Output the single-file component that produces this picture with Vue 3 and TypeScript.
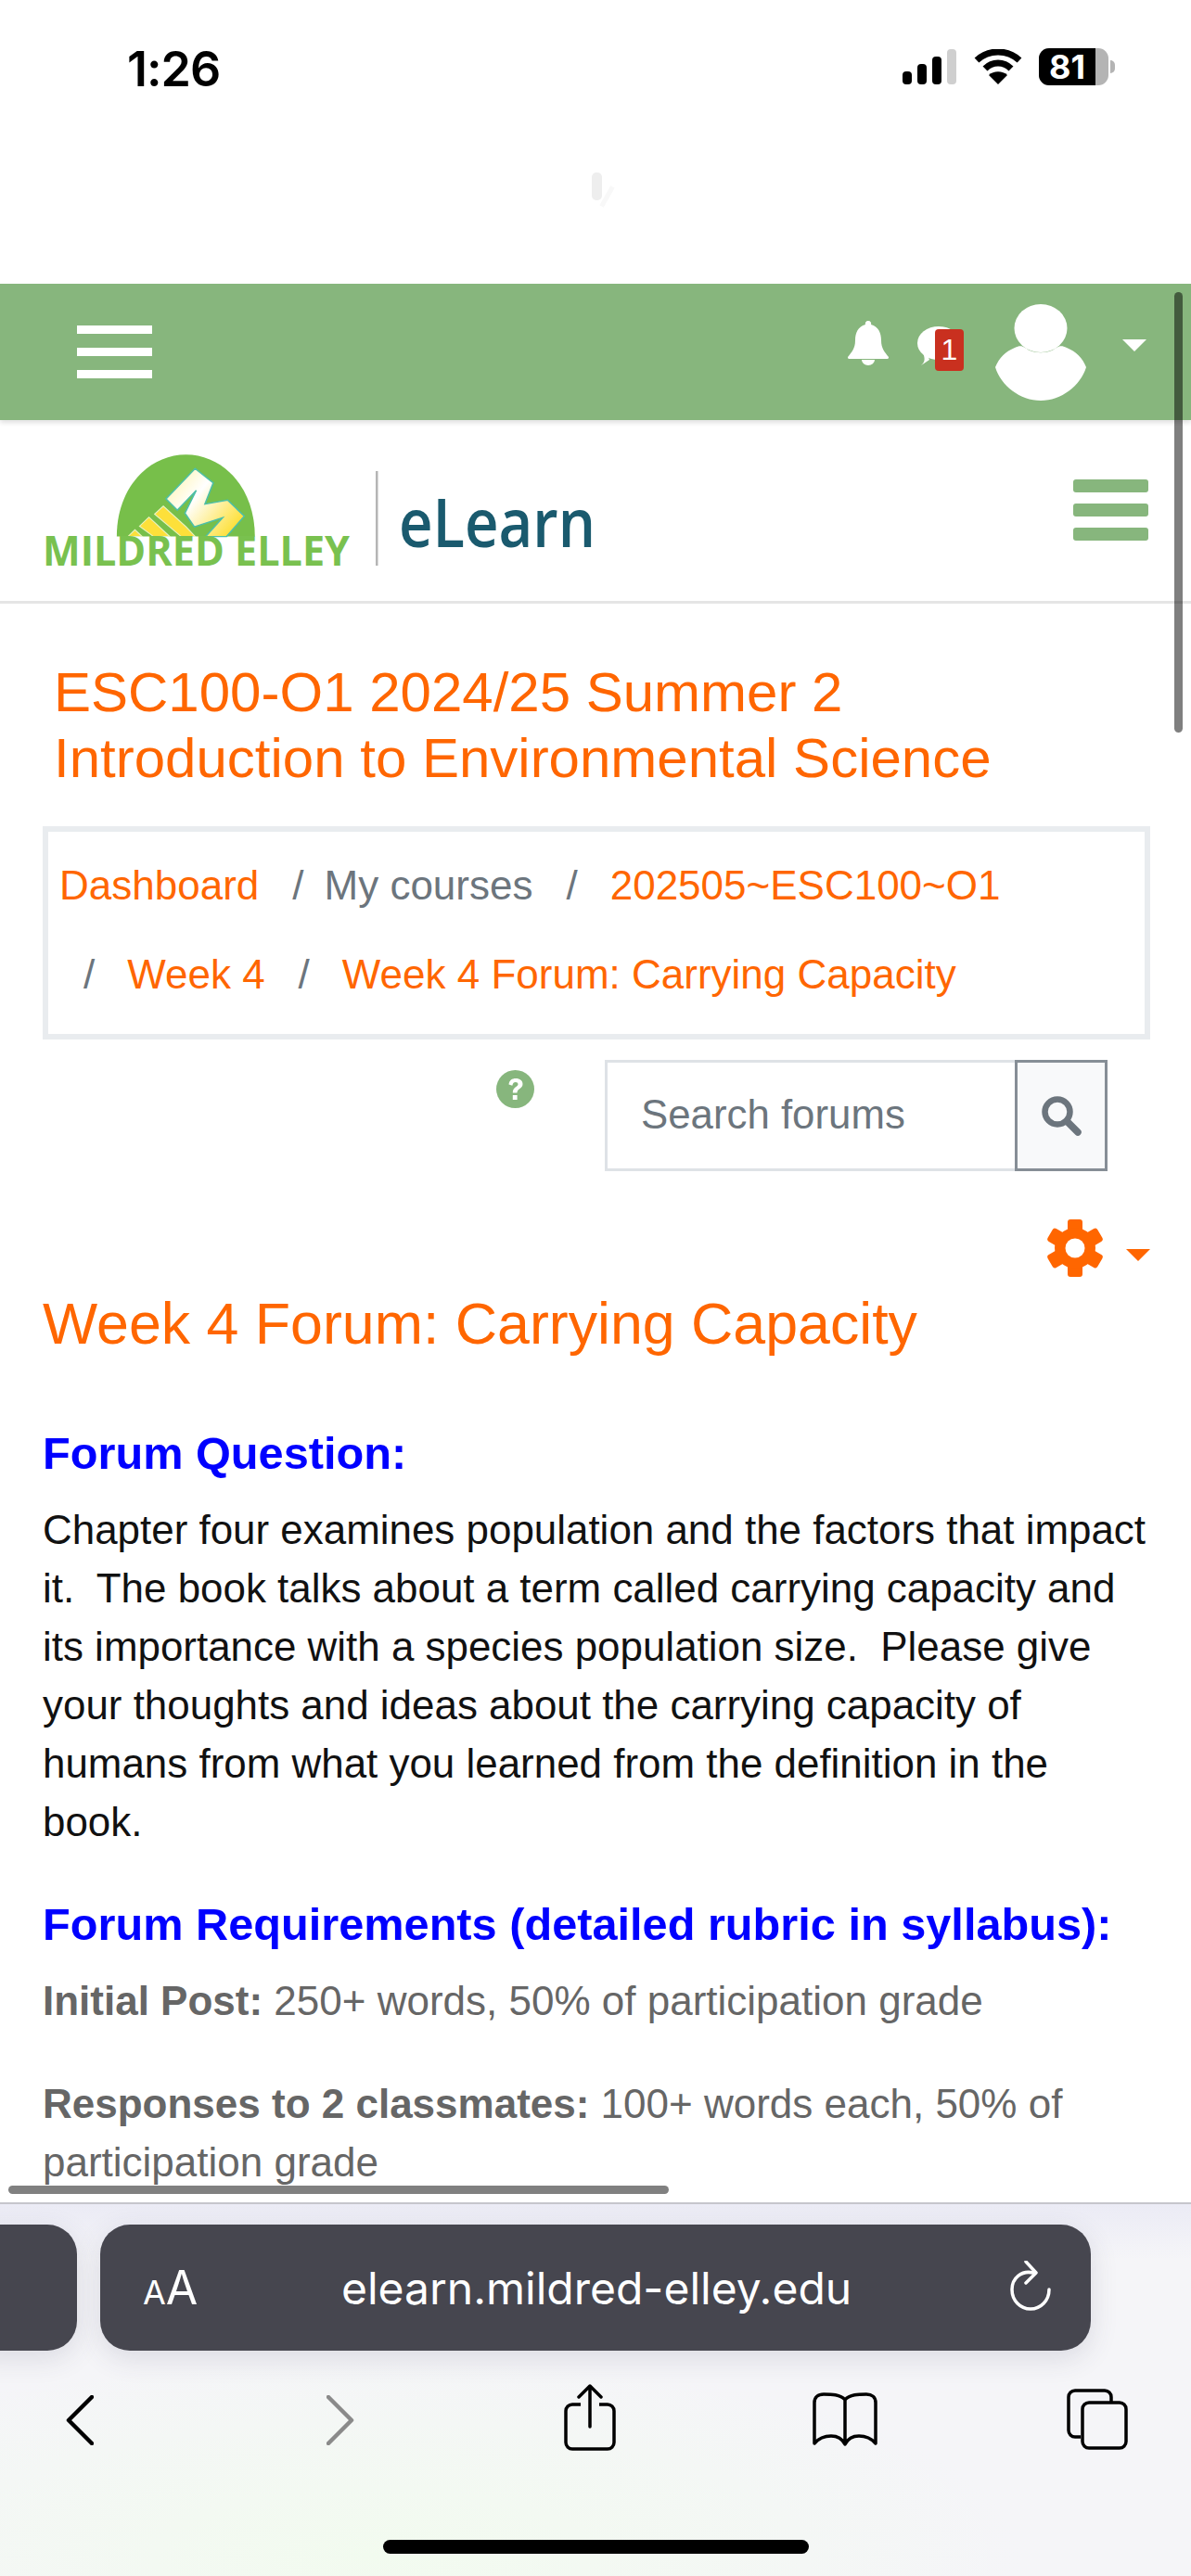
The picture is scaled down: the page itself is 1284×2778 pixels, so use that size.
<script setup lang="ts">
const paragraph = 'Chapter four examines population and the factors that impact it.  The book talks about a term called carrying capacity and its importance with a species population size.  Please give your thoughts and ideas about the carrying capacity of humans from what you learned from the definition in the book.'
</script>

<template>
  <div class="phone">
    <header class="status">
      <span class="time">1:26</span>
      <div class="status-icons">
        <svg class="signal" width="58" height="38" viewBox="0 0 58 38">
          <rect x="0" y="24" width="10" height="14" rx="4" fill="#000" />
          <rect x="16" y="16" width="10" height="22" rx="4" fill="#000" />
          <rect x="32" y="8" width="10" height="30" rx="4" fill="#000" />
          <rect x="48" y="0" width="10" height="38" rx="4" fill="#cfcfcf" />
        </svg>
        <svg class="wifi" width="52" height="38" viewBox="0 0 52 38">
          <path d="M3 12 C16 0 36 0 49 12" fill="none" stroke="#000" stroke-width="7" />
          <path d="M12 21 C20 13 32 13 40 21" fill="none" stroke="#000" stroke-width="7" />
          <path d="M16 28 C21 23 31 23 36 28 L26 38 Z" fill="#000" />
        </svg>
        <div class="battery"><span class="batt-fill">81</span></div>
        <i class="batt-nub"></i>
      </div>
    </header>
    <div class="spinner-row"><i class="spin"></i><i class="spin-b"></i></div>

    <main class="page">
      <nav class="topbar">
        <div class="burger white"><i></i><i></i><i></i></div>
        <div class="top-right">
          <svg class="bell" width="44" height="48" viewBox="0 0 44 48">
            <path d="M22 0 a3 3 0 0 1 3 4 C33 6 36 13 36 21 C36 30 40 34 44 39 a2 2 0 0 1 -1 2 H1 a2 2 0 0 1 -1 -2 C4 34 8 30 8 21 C8 13 11 6 19 4 a3 3 0 0 1 3 -4Z" fill="#fff" />
            <path d="M15 42 a7 6 0 0 0 14 0Z" fill="#fff" />
          </svg>
          <div class="msg">
            <svg width="40" height="42" viewBox="0 0 40 42">
              <ellipse cx="23" cy="18" rx="23" ry="18" fill="#fff" />
              <path d="M10 28 L13 36 L4 42 C9 38 8 34 6 28Z" fill="#fff" />
            </svg>
            <span class="badge">1</span>
          </div>
          <svg class="avatar" width="100" height="104" viewBox="0 0 100 104">
            <ellipse cx="50" cy="26" rx="28.5" ry="26" fill="#fff" />
            <path d="M22 47 C30 43 32 47 38 50 C46 53 54 53 62 50 C68 47 70 43 78 47 C88 51 95 58 99 68 C93 88 72 104 50 104 C28 104 7 88 1 68 C5 58 12 51 22 47Z" fill="#fff" />
          </svg>
          <i class="caret-white"></i>
        </div>
      </nav>

      <section class="brand">
        <svg class="logo" width="600" height="130" viewBox="46 490 600 130">
          <defs>
            <linearGradient id="mg" x1="0" y1="0" x2="1" y2="0.7">
              <stop offset="0" stop-color="#fff3a0" />
              <stop offset="0.45" stop-color="#ffffff" />
              <stop offset="1" stop-color="#fde03a" />
            </linearGradient>
          </defs>
          <g transform="translate(30 470) scale(0.408 0.327)">
            <path d="M235 332 C235 170 320 62 418 62 C515 62 600 170 600 332 Z" fill="#77bf4a" />
            <path d="M442 108 L490 155 L468 225 L528 212 L572 265 L525 332 L470 332 L515 270 L440 300 L415 255 L445 180 L395 245 L365 208 Z" fill="url(#mg)" stroke="#4dbfa8" stroke-width="4" />
            <path d="M265 332 L283 310 L302 332Z M295 298 L320 268 L375 332 L332 332Z M335 258 L358 232 L418 300 L442 332 L405 332Z" fill="#fde03a" stroke="#e9f3c0" stroke-width="3" />
          </g>
          <text x="46" y="610" class="logo-name" textLength="331" lengthAdjust="spacingAndGlyphs">MILDRED ELLEY</text>
          <rect x="405" y="508" width="2.5" height="102" fill="#b5b5b5" />
          <text x="430" y="590" class="logo-elearn" textLength="212" lengthAdjust="spacingAndGlyphs">eLearn</text>
        </svg>
        <div class="burger green"><i></i><i></i><i></i></div>
      </section>

      <h1 class="course">ESC100-O1 2024/25 Summer 2<br />Introduction to Environmental Science</h1>

      <ol class="crumbs">
        <li><a>Dashboard</a></li>
        <li><span class="sep">/</span><span class="plain">My courses</span></li>
        <li><span class="sep">/</span><a class="pad">202505~ESC100~O1</a></li>
        <li><span class="sep">/</span><a class="pad">Week 4</a></li>
        <li><span class="sep">/</span><a class="pad">Week 4 Forum: Carrying Capacity</a></li>
      </ol>

      <div class="search-row">
        <svg class="help" width="41" height="41" viewBox="0 0 41 41">
          <circle cx="20.5" cy="20.5" r="20.5" fill="#87b67d" />
          <path d="M13.5 15.5 C14 11 17 9 21 9 C25.5 9 28.5 11.5 28.5 15 C28.5 20 22.5 20 22.5 24.5 H17.8 C17.8 18 23.5 18 23.5 15.3 C23.5 13.8 22.3 13 20.8 13 C19 13 18 14 17.3 16.8 Z" fill="#fff" />
          <rect x="17.8" y="27" width="4.8" height="5" fill="#fff" />
        </svg>
        <div class="search-field">Search forums</div>
        <div class="search-btn">
          <svg width="44" height="44" viewBox="0 0 44 44">
            <circle cx="18" cy="18" r="13.5" fill="none" stroke="#6c757d" stroke-width="6.5" />
            <path d="M28 28 L40 40" stroke="#6c757d" stroke-width="7.5" stroke-linecap="round" />
          </svg>
        </div>
      </div>

      <div class="gear-row">
        <svg width="62" height="62" viewBox="0 0 62 62">
          <g fill="#ff6600">
            <rect x="23" y="0" width="16" height="62" rx="3" />
            <rect x="23" y="0" width="16" height="62" rx="3" transform="rotate(60 31 31)" />
            <rect x="23" y="0" width="16" height="62" rx="3" transform="rotate(120 31 31)" />
            <circle cx="31" cy="31" r="22" />
          </g>
          <circle cx="31" cy="31" r="10.5" fill="#fff" />
        </svg>
        <i class="caret-orange"></i>
      </div>

      <h2 class="title">Week 4 Forum: Carrying Capacity</h2>

      <h3 class="label">Forum Question:</h3>
      <p class="body">{{ paragraph }}</p>
      <h3 class="label second">Forum Requirements (detailed rubric in syllabus):</h3>
      <p class="req"><b>Initial Post:</b> 250+ words, 50% of participation grade</p>
      <p class="req"><b>Responses to 2 classmates:</b> 100+ words each, 50% of participation grade</p>

      <i class="vscroll"></i>
      <i class="hscroll"></i>
    </main>

    <footer class="safari">
      <div class="pills">
        <div class="pill side"></div>
        <div class="pill url">
          <span class="aa"><small>A</small>A</span>
          <span class="addr">elearn.mildred-elley.edu</span>
          <svg class="reload" width="44" height="54" viewBox="0 0 44 54">
            <path d="M25 13 C12 10 2 19 2 31 C2 43 11 52 22 52 C33 52 42 43 42 31" fill="none" stroke="#fff" stroke-width="3.5" stroke-linecap="round" />
            <path d="M17 1 L28 13 L17 24" fill="none" stroke="#fff" stroke-width="3.5" stroke-linecap="round" stroke-linejoin="round" />
          </svg>
        </div>
      </div>
      <div class="tools">
        <svg class="t-back" width="30" height="54" viewBox="0 0 30 54"><path d="M28 2 L3 27 L28 52" fill="none" stroke="#000" stroke-width="4.5" stroke-linecap="round" stroke-linejoin="round" /></svg>
        <svg class="t-fwd" width="30" height="54" viewBox="0 0 30 54"><path d="M2 2 L27 27 L2 52" fill="none" stroke="#8a8a8a" stroke-width="4.5" stroke-linecap="round" stroke-linejoin="round" /></svg>
        <svg class="t-share" width="56" height="72" viewBox="0 0 56 72">
          <path d="M18 22 H9 a7 7 0 0 0 -7 7 V63 a7 7 0 0 0 7 7 H47 a7 7 0 0 0 7 -7 V29 a7 7 0 0 0 -7 -7 H38" fill="none" stroke="#000" stroke-width="3.5" />
          <path d="M28 46 V2 M16 14 L28 2 L40 14" fill="none" stroke="#000" stroke-width="3.5" stroke-linecap="round" stroke-linejoin="round" />
        </svg>
        <svg class="t-book" width="70" height="58" viewBox="0 0 70 58">
          <path d="M35 8 C30 2 20 2 12 2 C6 2 2 5 2 11 V55 C8 48 14 47 20 47 C26 47 32 50 35 56 C38 50 44 47 50 47 C56 47 62 48 68 55 V11 C68 5 64 2 58 2 C50 2 40 2 35 8 V56" fill="none" stroke="#000" stroke-width="3.5" stroke-linejoin="round" />
        </svg>
        <svg class="t-tabs" width="66" height="66" viewBox="0 0 66 66">
          <path d="M15 52 H9 a7 7 0 0 1 -7 -7 V9 a7 7 0 0 1 7 -7 H41 a7 7 0 0 1 7 7 V14" fill="none" stroke="#000" stroke-width="3.5" />
          <rect x="17" y="15" width="47" height="49" rx="7" fill="none" stroke="#000" stroke-width="3.5" />
        </svg>
      </div>
      <div class="home"></div>
    </footer>
  </div>
</template>

<style>
html, body { margin: 0; padding: 0; background: #fff; }
</style>

<style scoped>
.phone { position: relative; width: 1284px; height: 2778px; overflow: hidden; display: flex; flex-direction: column; font-family: "Liberation Sans", Arial, sans-serif; background: #fff; }
i { display: block; }
.status { height: 186px; flex: none; display: flex; justify-content: space-between; align-items: flex-start; box-sizing: border-box; padding: 43px 82px 0 137px; }
.time { font: 600 52px/64px Inter, "Liberation Sans", sans-serif; color: #000; letter-spacing: -1px; }
.status-icons { display: flex; align-items: center; margin-top: 9px; }
.wifi { margin-left: 19px; }
.battery { margin-left: 18px; width: 75px; height: 40px; border-radius: 11px; background: #b4b4b4; }
.batt-fill { display: block; width: 61px; height: 40px; border-radius: 11px 0 0 11px; background: #000; color: #fff; font: 700 36px/40px Inter, sans-serif; text-align: center; }
.batt-nub { width: 5px; height: 14px; background: #b4b4b4; border-radius: 0 7px 7px 0; margin-left: 2px; }
.spinner-row { flex: none; height: 120px; display: flex; padding-left: 638px; }
.spin { width: 11px; height: 30px; border-radius: 5px; background: #eeeeee; }
.spin-b { width: 5px; height: 24px; margin-top: 14px; margin-left: 3px; background: #f8f8f8; transform: rotate(30deg); }

.page { position: relative; flex: 1; min-height: 0; overflow: hidden; }
.topbar { height: 147px; box-sizing: border-box; background: #87b67d; display: flex; justify-content: space-between; align-items: flex-start; padding: 45px 48px 0 83px; box-shadow: 0 3px 5px rgba(0,0,0,.12); position: relative; }
.burger { width: 81px; }
.burger.white i { height: 9px; background: #fff; margin-bottom: 15px; }
.burger.green i { height: 14px; background: #87b67d; border-radius: 3px; margin-bottom: 12px; }
.top-right { display: flex; align-items: flex-start; margin-top: -23px; }
.bell { margin-top: 18px; }
.msg { position: relative; width: 50px; margin-left: 31px; margin-top: 24px; }
.badge { position: absolute; left: 19px; top: 3px; width: 31px; height: 45px; background: #c9301f; border-radius: 4px; color: #fff; font-size: 32px; line-height: 45px; text-align: center; }
.avatar { margin-left: 33px; }
.caret-white { margin: 38px 0 0 38px; border-left: 13px solid transparent; border-right: 13px solid transparent; border-top: 13px solid #fff; }

.brand { height: 198px; box-sizing: border-box; border-bottom: 3px solid #e5e5e5; display: flex; justify-content: space-between; padding: 37px 46px 0 46px; }
.logo { display: block; }
.logo-name { font: 700 44px "Open Sans", "Liberation Sans", sans-serif; fill: #79c14f; }
.logo-elearn { font: 600 73px "Open Sans", sans-serif; fill: #1a5a6e; }
.burger.green { margin-top: 27px; }

.course { margin: 0; padding: 60px 46px 0 58px; font-weight: 400; font-size: 60px; line-height: 71px; color: #ff6600; }
.crumbs { list-style: none; margin: 38px 44px 0 46px; padding: 10px 0 16px 12px; border: 6px solid #e9ecef; display: flex; flex-wrap: wrap; font-size: 44px; line-height: 96px; }
.crumbs li { margin-right: 10px; }
.crumbs li + li { padding-left: 26px; }
.crumbs a { color: #ff6600; }
.crumbs a.pad { padding-left: 13px; }
.plain { color: #6c757d; }
.sep { color: #6c757d; margin-right: 22px; }

.search-row { display: flex; align-items: flex-start; margin-top: 22px; padding-left: 535px; }
.help { margin-top: 11px; margin-right: 76px; display: block; }
.search-field { width: 442px; height: 120px; box-sizing: border-box; border: 3px solid #dee2e6; border-right: 0; padding-left: 36px; font-size: 43.8px; line-height: 112px; color: #6c757d; }
.search-btn { width: 100px; height: 120px; box-sizing: border-box; border: 3px solid #868e96; background: #f8f9fa; display: flex; align-items: center; justify-content: center; }

.gear-row { display: flex; justify-content: flex-end; align-items: flex-start; margin-top: 52px; padding-right: 44px; }
.caret-orange { margin: 32px 0 0 24px; border-left: 13px solid transparent; border-right: 13px solid transparent; border-top: 13px solid #ff6600; }

.title { margin: 14px 36px 0 46px; font-weight: 400; font-size: 62.7px; line-height: 72px; color: #ff6600; }
.label { margin: 74px 36px 0 46px; font-size: 48.7px; line-height: 60px; font-weight: 700; color: #0000ff; }
.label.second { margin-top: 49px; }
.body { margin: 21px 40px 0 46px; font-size: 43.93px; line-height: 63px; color: #111; white-space: pre-wrap; }
.req { margin: 21px 40px 48px 46px; font-size: 44px; line-height: 63px; color: #666; white-space: pre-wrap; }
.req + .req { margin-top: 0; }

.vscroll { position: absolute; right: 9px; top: 9px; width: 9px; height: 475px; border-radius: 5px; background: rgba(0,0,0,.5); }
.hscroll { position: absolute; left: 9px; bottom: 9px; width: 712px; height: 9px; border-radius: 5px; background: #808080; }

.safari { flex: none; height: 403px; position: relative; border-top: 2px solid #c6c6cc; box-sizing: border-box; background: radial-gradient(ellipse 700px 220px at 400px 380px, #f2fbef 0%, rgba(242,251,239,0) 100%), linear-gradient(#ebebf5 0, #f5f5f8 60px, #f5f5f8 100%); }
.pills { display: flex; gap: 25px; margin-top: 22px; margin-left: -40px; }
.pill { height: 136px; border-radius: 32px; background: #46464f; box-shadow: 0 8px 30px rgba(60,60,90,.14); }
.pill.side { width: 123px; }
.pill.url { width: 1068px; position: relative; display: flex; align-items: center; color: #fff; }
.aa { margin-left: 46px; font: 400 50px Inter, sans-serif; width: 60px; white-space: nowrap; }
.aa small { font-size: 36px; }
.addr { margin-left: 154px; font: 400 48px Inter, sans-serif; letter-spacing: 0; }
.reload { position: absolute; left: 981px; top: 39px; }
.tools { display: flex; align-items: flex-start; margin-top: 36px; margin-left: 71px; height: 72px; }
.t-back { margin-top: 12px; }
.t-fwd { margin-left: 251px; margin-top: 12px; }
.t-share { margin-left: 226px; }
.t-book { margin-left: 212px; margin-top: 9px; }
.t-tabs { margin-left: 204px; margin-top: 5px; }
.home { position: absolute; left: 413px; bottom: 24px; width: 459px; height: 15px; border-radius: 8px; background: #000; }
</style>
